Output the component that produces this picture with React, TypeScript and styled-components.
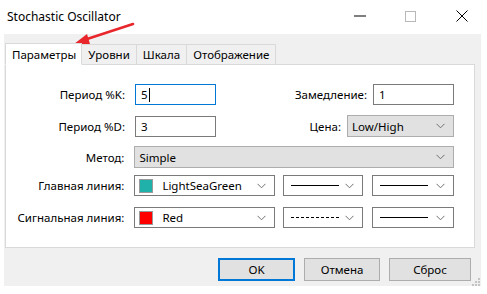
import * as React from 'react'
import styled, { createGlobalStyle } from 'styled-components'

const GlobalStyle = createGlobalStyle`
  html, body {
    margin: 0;
    padding: 0;
    background: #ffffff;
  }
  body {
    font-family: "Noto Sans", "Open Sans", sans-serif;
    font-size: 11.5px;
    color: #000;
  }
`

const Window = styled.div`
  position: relative;
  width: 487px;
  height: 294px;
  background: #ffffff;
  overflow: hidden;
`

const TitleBar = styled.div`
  height: 34px;
  display: flex;
  align-items: center;
  padding-left: 7px;
`

const Title = styled.div`
  flex: 1;
  font-size: 12px;
  color: #000;
  margin-top: -2px;
`

const Controls = styled.div`
  display: flex;
  align-items: center;
  height: 100%;
  margin-top: -2px;
`

const ControlButton = styled.div`
  width: 51px;
  height: 100%;
  display: flex;
  align-items: center;
  justify-content: center;
`

const Body = styled.div`
  margin: 0 6px 0 4px;
  height: 252px;
  background: #f0f0f0;
  padding: 8px 6px 0 1px;
  box-sizing: border-box;
`

const TabStrip = styled.div`
  display: flex;
  align-items: flex-end;
  height: 22px;
  position: relative;
  z-index: 1;
`

const Tab = styled.div<{ $active?: boolean }>`
  height: ${(p) => (p.$active ? '22px' : '20px')};
  padding: ${(p) => (p.$active ? '0 5px 0 6px' : '0 6px')};
  margin-right: -1px;
  display: flex;
  align-items: center;
  border: 1px solid #d9d9d9;
  border-bottom: ${(p) => (p.$active ? '1px solid #ffffff' : 'none')};
  background: ${(p) => (p.$active ? '#ffffff' : '#f0f0f0')};
  box-sizing: border-box;
  margin-bottom: ${(p) => (p.$active ? '-1px' : '0')};
  position: relative;
  z-index: ${(p) => (p.$active ? 2 : 1)};
  white-space: nowrap;
`

const Panel = styled.div`
  height: 184px;
  background: #ffffff;
  border: 1px solid #d9d9d9;
  box-sizing: border-box;
  padding: 19px 20px 0 0;
`

const Row = styled.div<{ $mt?: number }>`
  display: flex;
  align-items: center;
  margin-top: ${(p) => p.$mt ?? 0}px;
`

const Label = styled.div`
  width: 119px;
  padding-right: 10px;
  text-align: right;
  box-sizing: content-box;
  white-space: nowrap;
`

const SideLabel = styled.div`
  flex: 1;
  text-align: right;
  padding-right: 6px;
  white-space: nowrap;
`

const TextBox = styled.div<{ $focused?: boolean; $w?: number }>`
  width: ${(p) => p.$w ?? 81}px;
  height: 21px;
  box-sizing: border-box;
  border: 1px solid ${(p) => (p.$focused ? '#0078d7' : '#7a7a7a')};
  background: #fff;
  display: flex;
  align-items: center;
  padding-left: 5px;
`

const Caret = styled.span`
  display: inline-block;
  width: 1px;
  height: 14px;
  background: #000;
  margin-left: 1px;
`

const Select = styled.div<{ $w: number; $flat?: boolean; $h?: number }>`
  width: ${(p) => p.$w}px;
  height: ${(p) => p.$h ?? 21}px;
  box-sizing: border-box;
  border: 1px solid ${(p) => (p.$flat ? '#adadad' : '#7a7a7a')};
  background: ${(p) => (p.$flat ? '#e1e1e1' : '#ffffff')};
  display: flex;
  align-items: center;
  padding: 0 8px 0 4px;
`

const SelectValue = styled.div`
  flex: 1;
  display: flex;
  align-items: center;
  gap: 9px;
  white-space: nowrap;
`

const Swatch = styled.span<{ $color: string }>`
  width: 14px;
  height: 14px;
  box-sizing: border-box;
  border: 1px solid #9a9a9a;
  background: ${(p) => p.$color};
`

const LineSample = styled.span<{ $dashed?: boolean }>`
  width: 48px;
  height: 0;
  margin-left: 3px;
  border-top: 1px ${(p) => (p.$dashed ? 'dashed' : 'solid')} #000;
`

const Spacer = styled.div<{ $w: number }>`
  width: ${(p) => p.$w}px;
  flex-shrink: 0;
`

const Footer = styled.div`
  display: flex;
  justify-content: flex-end;
  gap: 9px;
  padding: 10px 0 0 0;
  margin-right: 4px;
`

const Button = styled.div<{ $default?: boolean; $w: number }>`
  width: ${(p) => p.$w}px;
  height: 23px;
  box-sizing: border-box;
  background: #e1e1e1;
  border: ${(p) => (p.$default ? '2px solid #0078d7' : '1px solid #adadad')};
  display: flex;
  align-items: center;
  justify-content: center;
`

const Arrow = styled.svg`
  position: absolute;
  left: 70px;
  top: 20px;
  pointer-events: none;
`

const Grip = styled.svg`
  position: absolute;
  right: 7px;
  bottom: 8px;
`

const Chevron = () => (
  <svg width="9" height="6" viewBox="0 0 9 6">
    <path d="M0.5 0.8 L4.5 4.8 L8.5 0.8" fill="none" stroke="#707070" strokeWidth="1" />
  </svg>
)

export default function App() {
  return (
    <Window>
      <GlobalStyle />
      <TitleBar>
        <Title>Stochastic Oscillator</Title>
        <Controls>
          <ControlButton>
            <svg width="12" height="2" viewBox="0 0 12 2">
              <rect x="0" y="0.5" width="12" height="1" fill="#000" />
            </svg>
          </ControlButton>
          <ControlButton>
            <svg width="11" height="11" viewBox="0 0 11 11">
              <rect x="0.5" y="0.5" width="10" height="10" fill="none" stroke="#b8b8b8" />
            </svg>
          </ControlButton>
          <ControlButton>
            <svg width="12" height="12" viewBox="0 0 12 12">
              <path d="M0.5 0.5 L11.5 11.5 M11.5 0.5 L0.5 11.5" stroke="#000" strokeWidth="1" />
            </svg>
          </ControlButton>
        </Controls>
      </TitleBar>
      <Body>
        <TabStrip>
          <Tab $active>Параметры</Tab>
          <Tab>Уровни</Tab>
          <Tab>Шкала</Tab>
          <Tab>Отображение</Tab>
        </TabStrip>
        <Panel>
          <Row>
            <Label>Период %K:</Label>
            <TextBox $focused>
              5<Caret />
            </TextBox>
            <SideLabel>Замедление:</SideLabel>
            <TextBox>1</TextBox>
          </Row>
          <Row $mt={10}>
            <Label>Период %D:</Label>
            <TextBox>3</TextBox>
            <SideLabel>Цена:</SideLabel>
            <Select $w={107} $flat $h={22}>
              <SelectValue>Low/High</SelectValue>
              <Chevron />
            </Select>
          </Row>
          <Row $mt={9}>
            <Label>Метод:</Label>
            <Select $w={321} $flat $h={22}>
              <SelectValue>Simple</SelectValue>
              <Chevron />
            </Select>
          </Row>
          <Row $mt={7}>
            <Label>Главная линия:</Label>
            <Select $w={141}>
              <SelectValue>
                <Swatch $color="#20b2aa" />
                LightSeaGreen
              </SelectValue>
              <Chevron />
            </Select>
            <Spacer $w={8} />
            <Select $w={81}>
              <SelectValue>
                <LineSample />
              </SelectValue>
              <Chevron />
            </Select>
            <Spacer $w={9} />
            <Select $w={82}>
              <SelectValue>
                <LineSample />
              </SelectValue>
              <Chevron />
            </Select>
          </Row>
          <Row $mt={11}>
            <Label>Сигнальная линия:</Label>
            <Select $w={141}>
              <SelectValue>
                <Swatch $color="#ff0000" />
                Red
              </SelectValue>
              <Chevron />
            </Select>
            <Spacer $w={8} />
            <Select $w={81}>
              <SelectValue>
                <LineSample $dashed />
              </SelectValue>
              <Chevron />
            </Select>
            <Spacer $w={9} />
            <Select $w={82}>
              <SelectValue>
                <LineSample />
              </SelectValue>
              <Chevron />
            </Select>
          </Row>
        </Panel>
        <Footer>
          <Button $default $w={77}>OK</Button>
          <Button $w={76}>Отмена</Button>
          <Button $w={82}>Сброс</Button>
        </Footer>
      </Body>
      <Arrow width="70" height="30" viewBox="0 0 70 30">
        <path d="M63 4 L14 20" stroke="#e8262b" strokeWidth="2.6" strokeLinecap="round" />
        <path d="M4 24 L17 14 L20 24 Z" fill="#e8262b" />
      </Arrow>
      <Grip width="9" height="9" viewBox="0 0 9 9">
        {[
          [7, 1],
          [4, 4],
          [7, 4],
          [1, 7],
          [4, 7],
          [7, 7],
        ].map(([x, y]) => (
          <rect key={`${x}-${y}`} x={x} y={y} width="2" height="2" fill="#c4c4c4" />
        ))}
      </Grip>
    </Window>
  )
}
